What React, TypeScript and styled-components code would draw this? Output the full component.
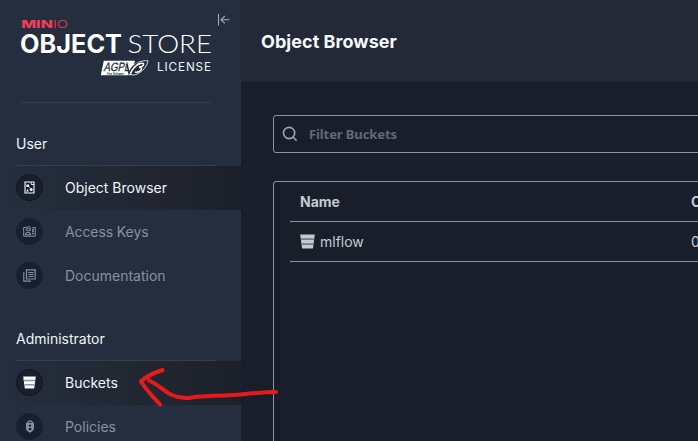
import React from "react";
import styled, { createGlobalStyle } from "styled-components";

const GlobalStyle = createGlobalStyle`
  * { box-sizing: border-box; }
  body { margin: 0; overflow: hidden; background: #191f2a; font-family: Inter, "Liberation Sans", sans-serif; }
`;

const Page = styled.div`
  position: relative;
  display: flex;
  width: 698px;
  height: 441px;
  overflow: hidden;
`;

const Sidebar = styled.aside`
  flex: 0 0 241px;
  height: 441px;
  overflow: hidden;
  background: #252e3e;
`;

const Brand = styled.div`
  display: flex;
  align-items: flex-start;
  height: 102px;
  padding: 13px 11px 0 21px;
`;

const Logo = styled.svg`
  flex: 0 0 190px;
  margin-top: 5px;
`;

const CollapseButton = styled.button`
  display: flex;
  margin: 0 0 0 6px;
  padding: 0;
  border: 0;
  background: none;
`;

const BrandRule = styled.hr`
  width: 190px;
  height: 1px;
  margin: 0 0 0 21px;
  border: 0;
  background: #343e50;
`;

const MenuGroup = styled.section<{ $gap: number }>`
  padding-top: ${(p) => p.$gap}px;
`;

const GroupTitle = styled.h2`
  display: flex;
  align-items: center;
  height: 43px;
  width: 200px;
  margin: 0 0 0 16px;
  padding-bottom: 2px;
  border-bottom: 1px solid #343e52;
  color: #eef4f5;
  font-size: 14px;
  font-weight: 400;
  letter-spacing: 0;
`;

const MenuItem = styled.a<{ $active?: boolean }>`
  display: flex;
  align-items: center;
  gap: 22px;
  height: 44px;
  padding-left: 16px;
  background: ${(p) => (p.$active ? "linear-gradient(90deg, #252e3e 0%, #20252f 70%, #1c202a 100%)" : "none")};
  color: ${(p) => (p.$active ? "#f0f6f7" : "#8790a0")};
  font-size: 14px;
`;

const MenuLabel = styled.span<{ $tracking?: number }>`
  padding-bottom: 1px;
  letter-spacing: ${(p) => p.$tracking ?? 0}px;
`;

const IconDisc = styled.span<{ $active?: boolean }>`
  display: flex;
  align-items: center;
  justify-content: center;
  width: 27px;
  height: 27px;
  margin-bottom: 1px;
  border-radius: 50%;
  border: 1px solid ${(p) => (p.$active ? "#0e131d" : "#182030")};
  background: #182030;
`;

const Main = styled.main`
  flex: 1;
  min-width: 0;
  height: 441px;
  background: #191f2a;
`;

const Header = styled.header`
  display: flex;
  align-items: center;
  height: 82px;
  padding-left: 20px;
  background: #232936;
`;

const Title = styled.h1`
  margin: 1px 0 0;
  color: #f5fafc;
  font-size: 18px;
  font-weight: 700;
  letter-spacing: 0.05px;
`;

const Content = styled.div`
  width: 800px;
  padding: 33px 0 0 32px;
`;

const SearchBox = styled.div`
  display: flex;
  align-items: center;
  gap: 11px;
  height: 38px;
  padding-left: 8px;
  border: 1px solid #8b94a5;
  border-radius: 3px;
`;

const Placeholder = styled.span`
  color: #606978;
  font-family: "Noto Sans", "DejaVu Sans", sans-serif;
  font-size: 13px;
  font-weight: 700;
  letter-spacing: -0.1px;
`;

const Table = styled.div`
  height: 400px;
  margin-top: 28px;
  padding: 0 16px;
  border: 1px solid #8b94a5;
  border-radius: 3px;
`;

const Row = styled.div<{ $head?: boolean }>`
  display: grid;
  grid-template-columns: 391px 1fr;
  align-items: center;
  height: 40px;
  padding-left: 10px;
  border-bottom: 1px solid #8b94a5;
  color: #c6cad1;
  font-size: 14px;
  font-weight: ${(p) => (p.$head ? 700 : 400)};
`;

const NameCell = styled.span`
  display: flex;
  align-items: center;
  gap: 5px;
`;

const Annotation = styled.svg`
  position: absolute;
  left: 130px;
  top: 360px;
  pointer-events: none;
`;

const BucketIcon = ({ size, color, band }: { size: number; color: string; band: string }) => (
  <svg width={size} height={size} viewBox="0 0 15 15">
    <path d="M0.2 0.5H14.8L12.9 14.5H2.1Z" fill={color} />
    <path d="M1 4.2H14L13.7 6H1.3ZM1.6 9.2H13.3L13.1 10.9H1.9Z" fill={band} />
  </svg>
);

const ObjectBrowserIcon = () => (
  <svg width="11" height="13" viewBox="0 0 11 13">
    <path d="M1 1H10V12H1Z" fill="none" stroke="#f4fafa" strokeWidth="1.1" />
    <path d="M7.2 1V3.5H10" fill="none" stroke="#f4fafa" strokeWidth=".9" />
    <path d="M2.4 3.4H5V6H2.4ZM5.5 5.5L6.5 6.2 5.2 7ZM3.4 8L5 10.5H2Z" fill="#f4fafa" />
    <circle cx="7.2" cy="8.4" r="1.5" fill="#f4fafa" />
  </svg>
);

const AccessKeysIcon = () => (
  <svg width="13" height="11" viewBox="0 0 13 11" fill="none" stroke="#8790a0">
    <path d="M3 1.5H.7V10.2H12.3V1.5H9.5" strokeWidth="1" />
    <path d="M3.3 5V.8H7.3V5" strokeWidth=".8" />
    <circle cx="5.3" cy="3.5" r="1.5" strokeWidth="1" />
    <path d="M2.5 8.7C3 5.5 7 5.5 7.5 8.7Z" strokeWidth="1.1" />
    <path d="M9 3.5H11M9 5.5H11M9 7.7H11" strokeWidth="1.3" />
  </svg>
);

const DocumentationIcon = () => (
  <svg width="13" height="13" viewBox="0 0 13 13" fill="none" stroke="#8790a0">
    <path d="M3.5.9H12.2V10H3.5ZM.8 3.2V12.2H8" strokeWidth="1.2" />
    <path d="M5.3 3.5H10.6M5.3 5.5H10.6M5.3 7.5H10.6" strokeWidth="1" />
  </svg>
);

const PoliciesIcon = () => (
  <svg width="10" height="13" viewBox="0 0 10 13">
    <path d="M2.8 3V1.8Q5-.2 7.2 1.8V3" fill="none" stroke="#8790a0" strokeWidth="1.1" />
    <path d="M1 2.8H9V9Q8.2 11.5 5 12.7 1.8 11.5 1 9Z" fill="#8790a0" />
    <circle cx="5" cy="5.6" r="1.2" fill="#182030" />
    <path d="M3 9.3Q5 6 7 9.3L5 10.2Z" fill="#182030" />
  </svg>
);

const BrandLogo = () => (
  <Logo width="190" height="60" viewBox="0 0 190 60" overflow="visible" fontFamily="Inter, sans-serif" fill="#fff">
    <g fill="#f43b58" fontSize="10.8">
      <text x=".2" y="9.8" fontWeight="800" textLength="31.6" lengthAdjust="spacingAndGlyphs">MIN</text>
      <text x="32" y="9.8" fontWeight="300" textLength="15" lengthAdjust="spacingAndGlyphs">IO</text>
    </g>
    <text x="-1" y="35.3" fontSize="25" fontWeight="700" textLength="102" lengthAdjust="spacingAndGlyphs">OBJECT</text>
    <text x="106.5" y="35.3" fontFamily="Lato" fontSize="25.5" fontWeight="300" textLength="84.5" lengthAdjust="spacingAndGlyphs">STORE</text>
    <path d="M82.8 42.8H114L110 57.3H79.8Z" fill="#fff" />
    <text transform="translate(82.5 53.3) skewX(-12)" fontFamily="Liberation Sans" fontSize="12" fill="#252e3e" stroke="#252e3e" strokeWidth=".3" textLength="26" lengthAdjust="spacingAndGlyphs">AGPL</text>
    <text x="86" y="56.5" fontSize="3" fontWeight="700" fontStyle="italic" fill="#252e3e" textLength="17" lengthAdjust="spacingAndGlyphs">Free Software</text>
    <path d="M127 42.7C120 42 112 46 109.6 51 107.5 56 111 58 115 56.5 121 54.5 126.5 48 127 42.7Z" fill="#252e3e" stroke="#fff" strokeWidth=".8" />
    <path d="M106 46L108 55.2Q111 47 119 44.4" fill="none" stroke="#252e3e" strokeWidth="1.5" />
    <path d="M109.5 55.5Q112 49 119 45M117 46.5Q123 43.8 122.5 46.5 122 48.8 118 49.2 122 49.5 119.8 52.2 117.5 54.8 114 54" fill="none" stroke="#fff" strokeWidth="1.5" />
    <text x="136" y="53.2" fontSize="11.7" textLength="54" fill="#eef2f5">LICENSE</text>
  </Logo>
);

export default function App() {
  return (
    <>
      <GlobalStyle />
      <Page>
        <Sidebar>
          <Brand>
            <BrandLogo />
            <CollapseButton aria-label="Collapse menu">
              <svg width="13" height="14" viewBox="0 0 13 14" fill="none" stroke="#a3aab5" strokeWidth="1.1">
                <path d="M1.5 1V12.5M12.4 6.7H4M7.8 3L4 6.7 7.8 10.4" />
              </svg>
            </CollapseButton>
          </Brand>
          <BrandRule />
          <MenuGroup $gap={20}>
            <GroupTitle>User</GroupTitle>
            <MenuItem $active>
              <IconDisc $active><ObjectBrowserIcon /></IconDisc>
              <MenuLabel>Object Browser</MenuLabel>
            </MenuItem>
            <MenuItem>
              <IconDisc><AccessKeysIcon /></IconDisc>
              <MenuLabel $tracking={-0.1}>Access Keys</MenuLabel>
            </MenuItem>
            <MenuItem>
              <IconDisc><DocumentationIcon /></IconDisc>
              <MenuLabel>Documentation</MenuLabel>
            </MenuItem>
          </MenuGroup>
          <MenuGroup $gap={20}>
            <GroupTitle>Administrator</GroupTitle>
            <MenuItem $active>
              <IconDisc $active><BucketIcon size={13} color="#f4fafa" band="#8f96a0" /></IconDisc>
              <MenuLabel>Buckets</MenuLabel>
            </MenuItem>
            <MenuItem>
              <IconDisc><PoliciesIcon /></IconDisc>
              <MenuLabel>Policies</MenuLabel>
            </MenuItem>
          </MenuGroup>
        </Sidebar>
        <Main>
          <Header><Title>Object Browser</Title></Header>
          <Content>
            <SearchBox>
              <svg width="16" height="16" viewBox="0 0 16 16" fill="none" stroke="#9da6b5" strokeWidth="1.6">
                <circle cx="7.1" cy="7" r="5.6" />
                <path d="M11 11L14.6 14.8" />
              </svg>
              <Placeholder>Filter Buckets</Placeholder>
            </SearchBox>
            <Table>
              <Row $head><span>Name</span><span>Objects</span></Row>
              <Row>
                <NameCell><BucketIcon size={15} color="#c6cad1" band="#747b87" />mlflow</NameCell>
                <span>0</span>
              </Row>
            </Table>
          </Content>
        </Main>
        <Annotation width="152" height="50" viewBox="130 360 152 50" fill="none" stroke="#e6191c" strokeWidth="4" strokeLinecap="round" strokeLinejoin="round">
          <path d="M162.5 370Q147 375 141 381.5 144 387 160 404.5M149 380.5C158 384 166 393 172 395Q182 399.5 192 397.5 202 396 225 395.5C242 395 258 392 276 392" />
        </Annotation>
      </Page>
    </>
  );
}
